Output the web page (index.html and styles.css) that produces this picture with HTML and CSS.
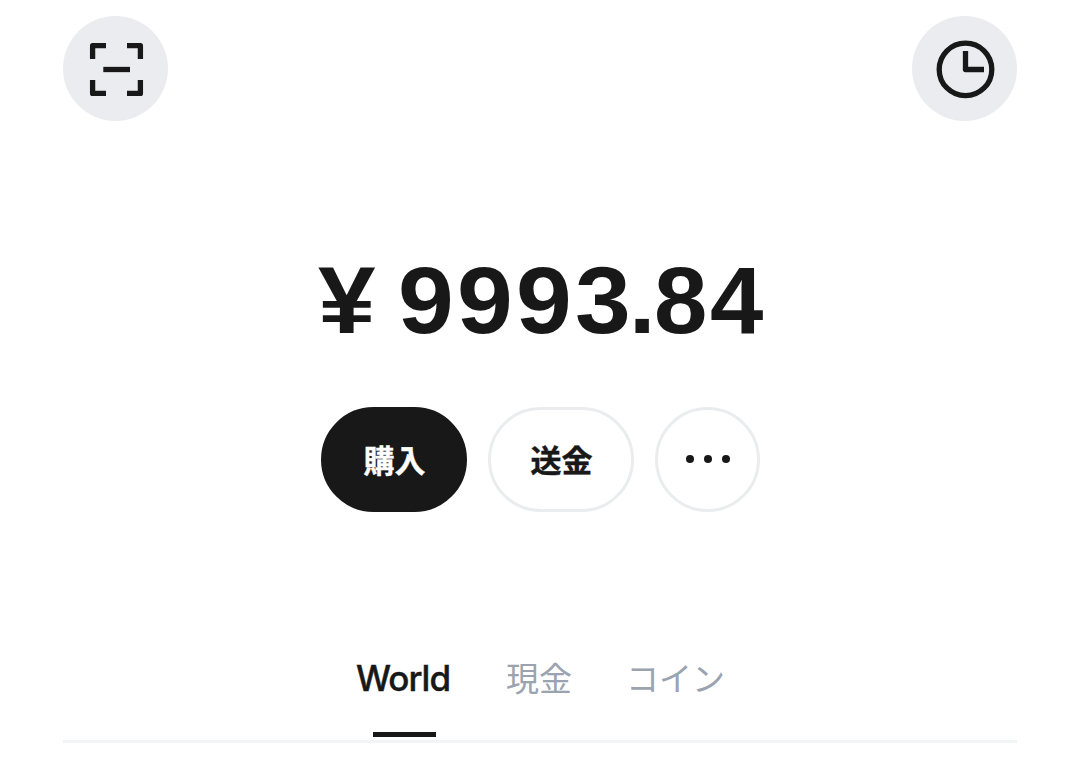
FILE: index.html
```html
<!DOCTYPE html>
<html lang="ja">
<head>
<meta charset="utf-8">
<title>Wallet</title>
<link rel="stylesheet" href="styles.css">
</head>
<body>
<main class="wallet">
  <header class="topbar">
    <button class="round" aria-label="Scan">
      <svg class="icon" viewBox="0 0 105 105"><path d="M29.600 43V29.600H43M64 29.600H77.400V43M77.400 64V77.400H64M43 77.400H29.600V64"/><path d="M40.300 53.500H67"/></svg>
    </button>
    <button class="round" aria-label="History">
      <svg class="icon" viewBox="0 0 105 105"><circle cx="53.500" cy="53.400" r="26.300"/><path d="M53.500 35V53.500H72"/></svg>
    </button>
  </header>
  <h1 class="balance"><span class="yen">¥</span><span class="whole">9993</span><span class="point">.</span><span class="cents">84</span></h1>
  <div class="actions">
    <button class="pill primary"><span class="label">購入</span></button>
    <button class="pill"><span class="label">送金</span></button>
    <button class="pill more" aria-label="More"><i class="dot"></i><i class="dot"></i><i class="dot"></i></button>
  </div>
  <nav class="tabs">
    <a class="tab active">World</a>
    <a class="tab cash">現金</a>
    <a class="tab coin">コイン</a>
  </nav>
</main>
</body>
</html>
```
FILE: styles.css
```css
* { box-sizing: border-box; }
body { margin: 0; background: #fff; color: #181818; font-family: Inter, "Liberation Sans", "Noto Sans CJK JP", sans-serif; }
.wallet { width: 954px; height: 763px; margin: 0 auto; padding-top: 16px; display: flex; flex-direction: column; }
.topbar { display: flex; justify-content: space-between; }
button { font: inherit; color: inherit; padding: 0; border: 0; }
.round { width: 105px; height: 105px; border-radius: 50%; background: #ebecf0; }
.icon { display: block; width: 105px; height: 105px; fill: none; stroke: #181818; stroke-width: 5.3; stroke-linejoin: round; }
.balance { display: flex; margin: 129px 0 0; padding-left: 255px; height: 100px; line-height: 101px; font-family: "Liberation Sans", sans-serif; font-size: 95px; font-weight: 700; white-space: nowrap; }
.yen { width: 80px; transform: scaleX(1.09); transform-origin: left; }
.whole { width: 231px; letter-spacing: 3.1px; transform: scaleX(1.055); transform-origin: left; }
.point { width: 25px; }
.cents { letter-spacing: 2.6px; transform: scaleX(1.01); transform-origin: left; }
.actions { display: flex; justify-content: center; gap: 21px; margin-top: 57px; }
.pill { width: 146px; height: 105px; border: 3px solid #ebecee; border-radius: 53px; background: #fff; font: 700 31px/1 "Noto Sans CJK JP", sans-serif; }
.label { display: block; padding: 0 0 3px 2px; -webkit-text-stroke: 0.4px currentColor; }
.primary { background: #181818; border-color: #181818; color: #fff; }
.more { width: 105px; display: flex; justify-content: center; align-items: center; gap: 10px; padding: 0 0 1px 1px; }
.dot { width: 8px; height: 8px; border-radius: 50%; background: #181818; }
.tabs { display: flex; height: 96px; margin-top: 135px; padding-left: 293px; border-bottom: 3px solid #f3f4f5; }
.tab { position: relative; height: 93px; line-height: 61px; font-family: "Noto Sans CJK JP", sans-serif; font-size: 33px; color: #9ba3ae; }
.active { width: 96px; line-height: 63px; font-family: Inter, sans-serif; font-size: 35px; font-weight: 500; letter-spacing: -1px; -webkit-text-stroke: 0.4px currentColor; color: #181818; }
.active::after { content: ""; position: absolute; left: 17px; bottom: 3px; width: 63px; height: 5px; background: #181818; }
.cash { margin-left: 54px; }
.coin { margin-left: 54px; }
```
